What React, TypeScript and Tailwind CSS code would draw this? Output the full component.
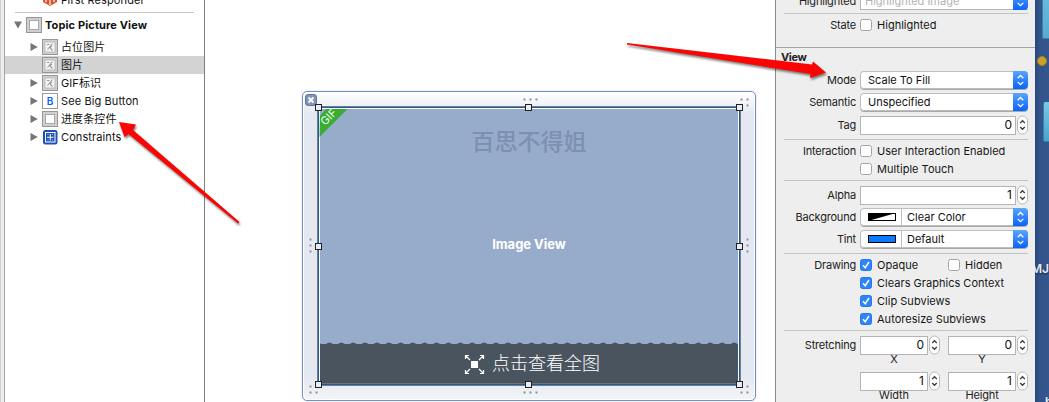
import React from "react";

const FONT = "font-['Inter','Noto_Sans_CJK_SC',sans-serif]";

function Triangle({ open = false }: { open?: boolean }) {
  return (
    <svg width="8" height="8" viewBox="0 0 8 8" className="shrink-0" fill="#757575">
      <path d={open ? "M0 .5H8L4 7.5Z" : "M.5 0V8L7.8 4Z"} />
    </svg>
  );
}

type IconKind = "view" | "image" | "button" | "constraints";

function NodeIcon({ kind }: { kind: IconKind }) {
  if (kind === "constraints") {
    return (
      <svg width="16" height="16" viewBox="0 0 16 16" className="shrink-0">
        <rect x="1" y="1" width="14.5" height="14.5" rx="2.5" fill="#1c50b4" />
        <rect x="3.5" y="3.5" width="9.500" height="9.500" fill="#1c50b4" stroke="#fff" strokeWidth="1" />
        <path d="M8.250 5v6.500M5 8.250h6.500" stroke="#fff" strokeWidth="1" />
        <path d="M6 5v1M10.4 5v1M6 10.4v1M10.4 10.4v1" stroke="#a9c2f0" strokeWidth="1" />
      </svg>
    );
  }
  if (kind === "button") {
    return (
      <span className="flex size-4 shrink-0 items-center justify-center border border-[#9a9a9a] bg-white text-[10px] font-semibold leading-none text-[#0a60ff]">
        B
      </span>
    );
  }
  return (
    <svg width="16" height="16" viewBox="0 0 16 16" className="shrink-0">
      <rect x=".5" y=".5" width="15" height="15" fill="#cfcfcf" stroke="#979797" />
      {kind === "view" ? (
        <rect x="3.5" y="3.5" width="9" height="9" fill="#fff" stroke="#a8a8a8" />
      ) : (
        <g>
          <rect x="3" y="3" width="10" height="10" fill="#f4f4f4" stroke="#b4b4b4" strokeWidth=".8" />
          <path d="M5 5.500h2.500M10.500 4.500 8.500 7 5.500 10.500M8.500 7.500h1.500M8.500 7.500v2l2 2" fill="none" stroke="#999" strokeWidth="1.100" />
        </g>
      )}
    </svg>
  );
}

function Node({ kind, label, arrow = true, selected = false }: { kind: IconKind; label: string; arrow?: boolean; selected?: boolean }) {
  return (
    <div className={`flex h-[18px] items-center pl-[25px] ${selected ? "bg-[#d3d3d3]" : ""}`}>
      <span className="flex w-3 shrink-0">{arrow && <Triangle />}</span>
      <NodeIcon kind={kind} />
      <span className="ml-[3px] whitespace-nowrap text-[11px] leading-[18px] tracking-[.1px] text-[#111]">{label}</span>
    </div>
  );
}

function Outline() {
  return (
    <aside className="flex w-[205px] shrink-0 border-r border-[#7e7e7e] bg-white">
      <div className="w-[5px] shrink-0 border-l border-r border-l-[#cfcfcf] border-r-[#a5a5a5] bg-[#eeecee]" />
      <div className="min-w-0 flex-1">
        <div className="flex h-[12px] items-end overflow-hidden pl-[37px]">
          <svg width="16" height="16" viewBox="0 0 16 16" className="mb-[6px] shrink-0">
            <path d="M1 3 8 0l7 3v9l-7 4-7-4Z" fill="#e2532d" />
            <path d="M4 4v8M8 4v11M12 4v8" stroke="#fff" strokeWidth="1.200" />
          </svg>
          <span className="mb-[3px] ml-[3px] whitespace-nowrap text-[11px] leading-[18px] tracking-[.12px] text-[#111]">First Responder</span>
        </div>
        <div className="ml-[10px] mr-[10px] h-px bg-[#c6c6c6]" />
        <div className="mt-[3px] flex h-[18px] items-center pl-[9px]">
          <Triangle open />
          <span className="ml-[4px] flex"><NodeIcon kind="view" /></span>
          <span className="ml-[3px] whitespace-nowrap text-[11px] font-bold tracking-[.12px] text-[#111]">Topic Picture View</span>
        </div>
        <div className="mt-[4px]">
          <Node kind="image" label="占位图片" />
          <Node kind="image" label="图片" arrow={false} selected />
          <Node kind="image" label="GIF标识" />
          <Node kind="button" label="See Big Button" />
          <Node kind="view" label="进度条控件" />
          <Node kind="constraints" label="Constraints" />
        </div>
      </div>
    </aside>
  );
}

const dots = [
  [524, 99], [530, 99], [536, 99], [741, 99], [747, 99], [747, 105],
  [310, 239], [310, 245], [310, 251], [747, 239], [747, 245], [747, 251],
  [310, 386], [310, 392], [316, 392], [524, 392], [530, 392], [536, 392],
  [741, 392], [747, 392], [747, 386],
];
const handles = [
  [318, 107], [528, 107], [739, 107], [318, 246], [739, 246], [318, 384], [528, 384], [739, 384],
];
const scallops = Array.from({ length: 37 }, (_, i) => `M${i * 11.9 - 6} 3q4.500 -5 9 0Z`).join("");

function Canvas() {
  return (
    <main className="relative w-[570px] shrink-0 bg-white pl-[97px] pt-[91px]">
      <div className="flex h-[310px] w-[454px] flex-col rounded-[5px] border border-[#7390cb] bg-[linear-gradient(#fff,#e4e8f0_22px,#e4e8f0_285px,#f3f5f7)] shadow-[0_0_2px_#c5cede,inset_0_0_0_1px_#fff]">
        <div className="flex h-[14px] shrink-0 items-start pl-[2px] pt-[2px]">
          <svg width="12" height="12" viewBox="0 0 12 12" className="shrink-0">
            <rect x=".5" y=".5" width="11" height="11" rx="2.500" fill="#8093b8" stroke="#647596" />
            <path d="m3.500 3.500 5 5m0-5-5 5" stroke="#fff" strokeWidth="2" />
          </svg>
        </div>
        <div className="ml-[14px] flex h-[280px] w-[424px] shrink-0 border border-[#7c7c7c]">
          <div className="flex flex-1 border border-[#1b5ba5]">
            <div className="flex flex-1 flex-col overflow-hidden border border-b-0 border-white bg-[#97abcb]">
              <div className="flex h-[114px] justify-center">
                <span className="pt-[16px] text-[23px] font-medium leading-[34px] text-[#7c90b3]">百思不得姐</span>
              </div>
              <div className="flex h-[44px] items-center justify-center text-[13px] font-bold tracking-[-.02px] text-white">Image View</div>
              <div className="flex-1" />
              <div className="-mx-px flex h-[42px] shrink-0 flex-col">
                <svg width="420" height="3" className="shrink-0" fill="#4a545f"><path d={scallops} /><path d="M0 2h420v1H0Z" /></svg>
                <div className="flex flex-1 items-center border-b border-[#6d7278] bg-[#4a545f] pl-[145px] text-white">
                  <svg width="21" height="21" viewBox="0 0 21 21" fill="none" stroke="#fff" strokeWidth="1.200">
                    <path d="M7 7h7v7H7Z" fill="#fff" stroke="none" />
                    <path d="M1.500 5V1.500H5M1.500 1.500l4.500 4.500M16 1.500h3.500V5M19.500 1.500 15 6M1.500 16v3.500H5M1.500 19.500 6 15M16 19.500h3.500V16M19.500 19.500 15 15" />
                  </svg>
                  <span className="ml-[7px] whitespace-nowrap text-[18px] font-light leading-none">点击查看全图</span>
                </div>
              </div>
            </div>
          </div>
        </div>
      </div>
      <svg width="570" height="402" viewBox="205 0 570 402" className="absolute left-0 top-0">
        <path d="M320 109h27.500L319.500 137Z" fill="#3aab34" />
        <path d="M320 109h6l-6 7Z" fill="#97abcb" />
        <text transform="translate(325 126) rotate(-45)" fill="#e9ffe6" fontSize="11">GIF</text>
        {dots.map(([x, y], i) => <rect key={i} x={x - 0.5} y={y - 0.5} width="2" height="2" fill="#8d8f93" />)}
        {handles.map(([x, y], i) => <rect key={i} x={x - 2.5} y={y - 2.5} width="6" height="6" fill="#e8edf5" stroke="#222" />)}
      </svg>
    </main>
  );
}

function Row({ label = "", className = "", children }: { label?: string; className?: string; children?: React.ReactNode }) {
  return (
    <div className={`flex h-[18px] shrink-0 items-center ${className}`}>
      <span className="mr-[4px] w-[80px] shrink-0 whitespace-nowrap text-right text-[11px] leading-none tracking-[-.2px] text-[#222]">{label}</span>
      {children}
    </div>
  );
}

function Rule({ className = "" }: { className?: string }) {
  return <div className={`ml-2 mr-[7px] h-px shrink-0 bg-[#c3c3c3] ${className}`} />;
}

function Updown() {
  return (
    <svg width="15" height="18" viewBox="0 0 15 18" className="shrink-0">
      <defs><linearGradient id="blue" x2="0" y2="1"><stop stopColor="#5aa5fb" /><stop offset="1" stopColor="#0a62fb" /></linearGradient></defs>
      <path d="M0 0H11a4 4 0 0 1 4 4V14a4 4 0 0 1-4 4H0Z" fill="url(#blue)" />
      <path d="m4.700 7.300 2.800-2.800 2.800 2.800m-5.600 3.600 2.800 2.800 2.800-2.800" fill="none" stroke="#fff" strokeWidth="1.300" />
    </svg>
  );
}

function Popup({ text, swatch }: { text: string; swatch?: "clear" | "blue" }) {
  return (
    <div className="flex h-[18px] w-[168px] shrink-0 items-center rounded-[4px] bg-white shadow-[inset_0_0_0_1px_#bdbdbd,0_1px_0_#a9a9a9]">
      {swatch && (
        <span className="flex h-full w-[42px] items-center border-r border-[#bdbdbd] pl-[8px]">
          <svg width="28" height="8" viewBox="0 0 28 8">
            <rect x=".5" y=".5" width="27" height="7" fill={swatch === "blue" ? "#0a7aff" : "#fff"} stroke="#000" />
            {swatch === "clear" && <path d="M0 8V0h28Z" />}
          </svg>
        </span>
      )}
      <span className={`flex-1 whitespace-nowrap text-[11px] leading-none text-[#111] ${swatch ? "pl-[5px]" : "pl-[8px]"}`}>{text}</span>
      <Updown />
    </div>
  );
}

function NumberField({ value, wide = false }: { value: string; wide?: boolean }) {
  return (
    <div className="flex h-[20px] shrink-0 items-center">
      <span className={`flex h-[19px] items-center justify-end border border-[#b4b4b4] bg-white pr-[3px] text-[12px] leading-none text-[#111] ${wide ? "w-[156px]" : "w-[68px]"}`}>{value}</span>
      <svg width="11" height="20" viewBox="0 0 11 20" className="ml-px">
        <rect x=".5" y="1" width="10" height="18" rx="5" fill="#fff" stroke="#b8b8b8" />
        <path d="M3.200 8 5.500 5.700 7.800 8M3.200 12 5.500 14.300 7.800 12" fill="none" stroke="#3c3c3c" strokeWidth="1.300" />
      </svg>
    </div>
  );
}

function Check({ text, on = false, className = "" }: { text: string; on?: boolean; className?: string }) {
  return (
    <span className={`flex shrink-0 items-center ${className}`}>
      <svg width="12" height="12" viewBox="0 0 12 12" className="shrink-0">
        <rect x=".5" y=".5" width="11" height="11" rx="2" fill={on ? "#2f84fc" : "#fff"} stroke={on ? "#2377f0" : "#a6a6a6"} />
        {on && <path d="m3 6.300 2.200 2.400L9 3" fill="none" stroke="#fff" strokeWidth="1.500" />}
      </svg>
      <span className="ml-[5px] whitespace-nowrap text-[11px] leading-none tracking-[.02px] text-[#161616]">{text}</span>
    </span>
  );
}

function Captions({ left, right, className = "" }: { left: string; right: string; className?: string }) {
  return (
    <div className={`flex h-[10px] shrink-0 pl-[84px] text-center text-[11px] leading-[9px] tracking-[-.15px] text-[#222] ${className}`}>
      <span className="w-[68px]">{left}</span>
      <span className="ml-[20px] w-[68px]">{right}</span>
    </div>
  );
}

function Inspector() {
  return (
    <aside className="flex w-[260px] shrink-0 flex-col overflow-hidden border-l border-[#8a8a8a] bg-[#eeeeee]">
      <Row label="Highlighted" className="-mt-[8px]">
        <div className="flex h-[18px] w-[168px] items-center border border-r-0 border-[#b4b4b4] bg-white">
          <span className="flex-1 pl-[4px] text-[11px] leading-none text-[#b3b3b3]">Highlighted Image</span>
          <Updown />
        </div>
      </Row>
      <Rule className="mt-[3px]" />
      <Row label="State" className="mt-[2px]"><Check text="Highlighted" /></Row>
      <div className="mt-[13px] h-px shrink-0 bg-[#a3a3a3]" />
      <div className="h-[18px] shrink-0 pl-[5px] text-[11px] font-bold leading-[19px] tracking-[-.4px] text-[#222]">View</div>
      <Row label="Mode" className="mt-[5px]"><Popup text="Scale To Fill" /></Row>
      <Row label="Semantic" className="mt-[4px]"><Popup text="Unspecified" /></Row>
      <Row label="Tag" className="mt-[5px]"><NumberField value="0" wide /></Row>
      <Rule className="mt-[5px]" />
      <Row label="Interaction" className="mt-[2px]"><Check text="User Interaction Enabled" /></Row>
      <Row><Check text="Multiple Touch" /></Row>
      <Rule className="mt-[2px]" />
      <Row label="Alpha" className="mt-[5px]"><NumberField value="1" wide /></Row>
      <Row label="Background" className="mt-[4px]"><Popup text="Clear Color" swatch="clear" /></Row>
      <Row label="Tint" className="mt-[4px]"><Popup text="Default" swatch="blue" /></Row>
      <Rule className="mt-[5px]" />
      <Row label="Drawing" className="mt-[2px]">
        <Check text="Opaque" on className="w-[88px]" />
        <Check text="Hidden" />
      </Row>
      <Row><Check text="Clears Graphics Context" on /></Row>
      <Row><Check text="Clip Subviews" on /></Row>
      <Row><Check text="Autoresize Subviews" on /></Row>
      <Rule className="mt-[2px]" />
      <Row label="Stretching" className="mt-[5px]">
        <NumberField value="0" />
        <span className="w-[8px]" />
        <NumberField value="0" />
      </Row>
      <Captions left="X" right="Y" className="mt-px" />
      <Row className="mt-[7px]">
        <NumberField value="1" />
        <span className="w-[8px]" />
        <NumberField value="1" />
      </Row>
      <Captions left="Width" right="Height" className="mt-px" />
    </aside>
  );
}

function Desktop() {
  return (
    <div className="relative flex flex-1 flex-col overflow-hidden bg-[linear-gradient(90deg,#2a4777,#33548b_4px,#34568d)]">
      <div className="ml-[7px] h-[39px] w-4 shrink-0 rounded-bl-[2px] border-b border-l border-[#2f83ad] bg-[linear-gradient(#68b9dc,#58abd0)]" />
      <div className="ml-[2px] mt-[17px] size-[10px] shrink-0 rounded-full border border-[#a98018] bg-[#cba026]" />
      <div className="ml-[8px] mt-[36px] h-[40px] w-4 shrink-0 rounded-l-[2px] border-b border-l border-[#2f83ad] bg-[linear-gradient(#7cc8e5,#4ca3cd)]" />
      <div className="-ml-[4px] mt-[119px] whitespace-nowrap text-[12px] font-semibold leading-[15px] text-[#e9edf4] [text-shadow:0_1px_2px_#14233f]">MJ</div>
      <div className="ml-[10px] mt-[118px] whitespace-nowrap text-[12px] font-semibold leading-[15px] text-[#e9edf4]">h</div>
    </div>
  );
}

export default function App() {
  return (
    <div className={`relative flex h-[402px] w-[1049px] overflow-hidden bg-white ${FONT}`}>
      <Outline />
      <Canvas />
      <Inspector />
      <Desktop />
      <svg width="1049" height="402" className="pointer-events-none absolute left-0 top-0 drop-shadow-[1px_2px_1px_rgba(0,0,0,0.5)]" fill="#fb0404">
        <path d="M119 122 136 124.500 133 130 239.500 222 238 223.500 128.500 134 124.500 137Z" />
        <path d="M627 43 812 64.500 813 61.500 826 72.500 810 78 810.500 74 627 44.500Z" />
      </svg>
    </div>
  );
}
